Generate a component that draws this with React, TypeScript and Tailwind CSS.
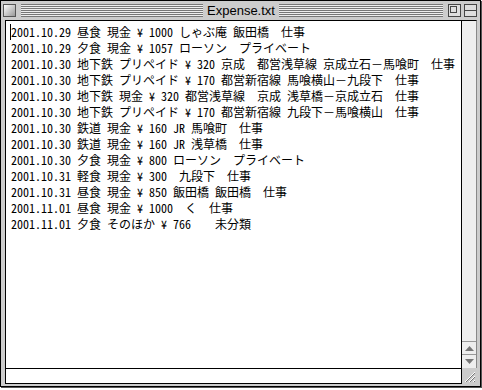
const lines = [
  "2001.10.29 昼食 現金 ¥ 1000 しゃぶ庵 飯田橋　仕事",
  "2001.10.29 夕食 現金 ¥ 1057 ローソン　プライベート",
  "2001.10.30 地下鉄 プリペイド ¥ 320 京成　都営浅草線 京成立石－馬喰町　仕事",
  "2001.10.30 地下鉄 プリペイド ¥ 170 都営新宿線 馬喰横山－九段下　仕事",
  "2001.10.30 地下鉄 現金 ¥ 320 都営浅草線　京成 浅草橋－京成立石　仕事",
  "2001.10.30 地下鉄 プリペイド ¥ 170 都営新宿線 九段下－馬喰横山　仕事",
  "2001.10.30 鉄道 現金 ¥ 160 JR 馬喰町　仕事",
  "2001.10.30 鉄道 現金 ¥ 160 JR 浅草橋　仕事",
  "2001.10.30 夕食 現金 ¥ 800 ローソン　プライベート",
  "2001.10.31 軽食 現金 ¥ 300　九段下　仕事",
  "2001.10.31 昼食 現金 ¥ 850 飯田橋 飯田橋　仕事",
  "2001.11.01 昼食 現金 ¥ 1000　く　仕事",
  "2001.11.01 夕食 そのほか ¥ 766　　未分類",
];

const Stripes = ({ className = "" }: { className?: string }) => (
  <div
    className={
      "h-[13px] bg-[repeating-linear-gradient(to_bottom,#777777_0px,#777777_1px,#eeeeee_1px,#eeeeee_2px)] " +
      className
    }
  />
);

const TitleBar = () => (
  <div className="h-[19px] flex items-center pl-[2px] pr-[3px]">
    {/* close box */}
    <div className="w-[13px] h-[13px] border border-[#555555] bg-linear-to-br from-[#ffffff] to-[#999999]" />
    <Stripes className="w-[182px] ml-[5px]" />
    <div className="w-[76px] text-center text-[13px] leading-none text-black [font-family:'Liberation_Sans',Arial,sans-serif]">
      Expense.txt
    </div>
    <Stripes className="flex-1" />
    {/* zoom box */}
    <div className="ml-[5px] w-[13px] h-[13px] border border-[#444444] bg-[#dddddd] p-px">
      <div className="w-[7px] h-[7px] border border-[#444444]" />
    </div>
    {/* collapse box */}
    <div className="ml-[3px] w-[13px] h-[13px] border border-[#444444] bg-[#dddddd] flex flex-col justify-center">
      <div className="h-px bg-[#444444]" />
    </div>
  </div>
);

const GrowBox = () => (
  <svg width="15" height="16" viewBox="0 0 15 16">
    {[0, 4, 8].map((o) => (
      <g key={o}>
        <line x1={3 + o} y1={14} x2={13} y2={4 + o} stroke="#ffffff" strokeWidth="1" />
        <line x1={4 + o} y1={14} x2={13} y2={5 + o} stroke="#777777" strokeWidth="1" />
      </g>
    ))}
  </svg>
);

export default function App() {
  return (
    <div className="w-[482px] h-[390px] bg-white">
      <div className="w-[481px] h-[387px] border border-black bg-[#cccccc] flex flex-col shadow-[1px_1px_0_#555555]">
        <TitleBar />
        <div className="flex flex-1 pb-[2px] pl-[4px] pr-[3px]">
          <div className="flex-1 flex flex-col border border-black">
            <div className="flex-1 bg-white pl-[5px] pt-[3px] text-[12px] leading-[16px] whitespace-pre text-black overflow-hidden [font-family:'Noto_Sans_Mono_CJK_JP','Noto_Sans_CJK_JP',sans-serif]">
              {lines.map((line, i) => (
                <div key={i} className="relative">
                  {i === 0 && (
                    <span className="absolute left-[-1px] top-0 w-px h-[16px] bg-black" />
                  )}
                  {line}
                </div>
              ))}
            </div>
            <div className="h-[15px] border-t border-black bg-white" />
          </div>
          <div className="w-[15px] flex flex-col">
            <div className="flex-1 flex flex-col justify-end border-t border-black border-r border-r-[#888888] bg-[#eeeeee]">
              <div className="h-[13px] border-t border-[#999999] flex items-center justify-center">
                <svg width="9" height="5" viewBox="0 0 9 5">
                  <polygon points="4.5,0 9,5 0,5" fill="#777777" />
                </svg>
              </div>
              <div className="h-[14px] border-t border-[#999999] flex items-center justify-center">
                <svg width="9" height="5" viewBox="0 0 9 5">
                  <polygon points="0,0 9,0 4.5,5" fill="#777777" />
                </svg>
              </div>
            </div>
            <div className="h-[16px]">
              <GrowBox />
            </div>
          </div>
        </div>
      </div>
    </div>
  );
}
